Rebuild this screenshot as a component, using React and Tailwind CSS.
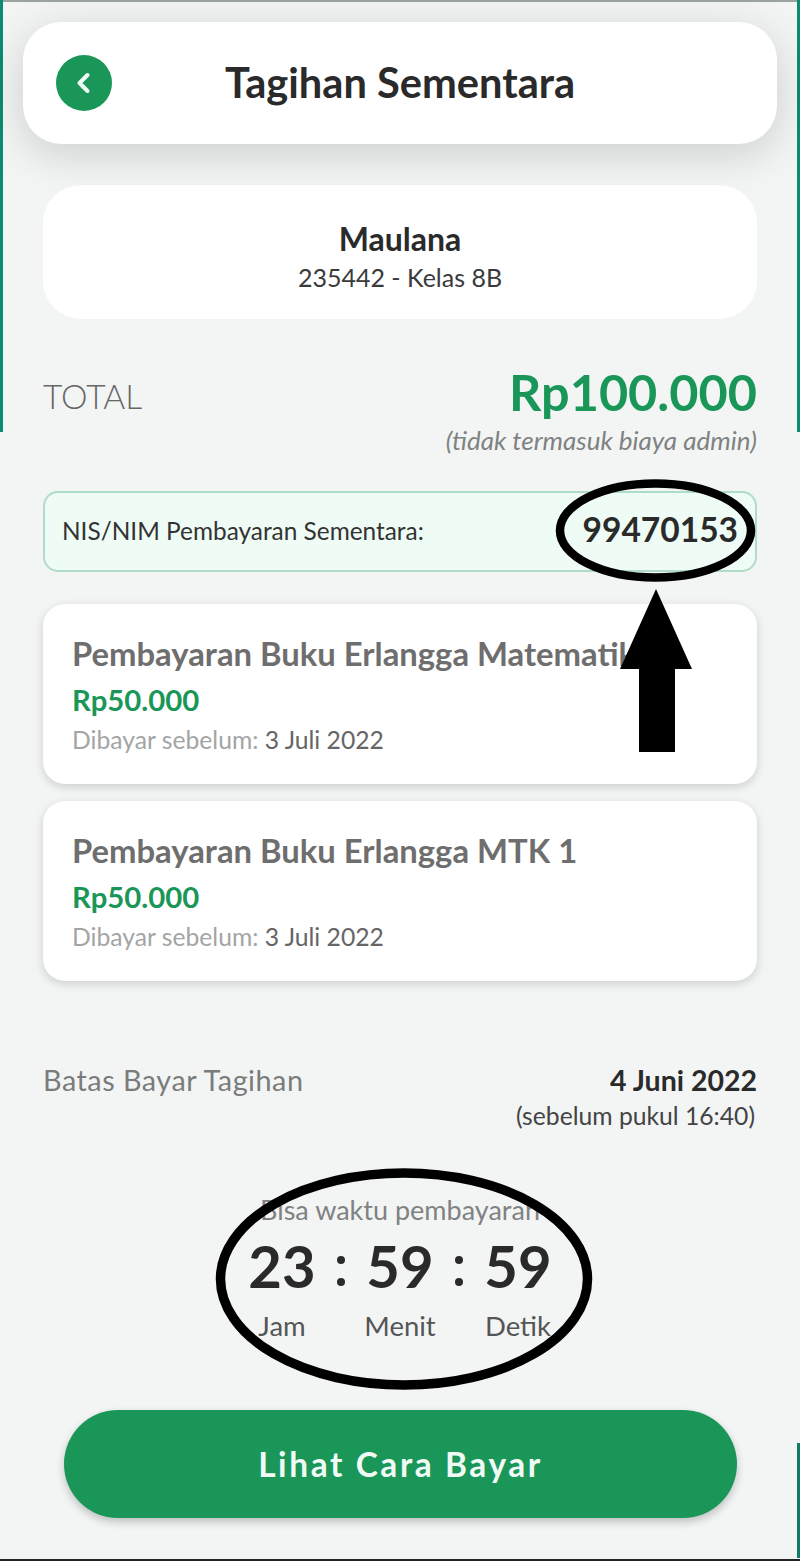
export default function App() {
  const Bill = ({ title, mt }) => (
    <div className={`mx-[43px] ${mt} h-[180px] rounded-[22px] bg-white pl-[29px] pt-[29px] shadow-[0_3px_10px_rgba(0,0,0,0.16)]`}>
      <div className="text-[32.8px] leading-[42px] font-bold whitespace-nowrap text-[#6e6e6e]">{title}</div>
      <div className="mt-[7px] text-[29.3px] leading-[36px] font-bold text-[#1a9758]">Rp50.000</div>
      <div className="mt-[7px] text-[24.7px] leading-[30px] text-[#a3a5a5]">
        Dibayar sebelum: <span className="text-[#666]">3 Juli 2022</span>
      </div>
    </div>
  );
  const Time = ({ value, label }) => (
    <div className="flex w-[66px] flex-col items-center">
      <div className="text-[58px] leading-[62px] font-bold text-[#2a2a2a]">{value}</div>
      <div className="mt-[12px] text-[27.5px] leading-[34px] whitespace-nowrap text-[#555]">{label}</div>
    </div>
  );
  const Colon = () => (
    <div className="flex h-[62px] w-[52px] flex-col items-center justify-center gap-[14px] pt-[10px]">
      <span className="h-[8px] w-[8px] rounded-full bg-[#2a2a2a]" />
      <span className="h-[8px] w-[8px] rounded-full bg-[#2a2a2a]" />
    </div>
  );
  return (
    <div className="relative h-[1561px] w-[800px] overflow-hidden bg-[#f3f5f5] pt-[22px] font-['Lato','Noto_Sans',sans-serif]">
      <div className="absolute top-0 left-0 h-[2px] w-full bg-[#9aa3a0]" />
      <div className="absolute top-0 left-0 h-[432px] w-[3px] bg-[#0f8a72]" />
      <div className="absolute top-0 right-0 h-[432px] w-[3px] bg-[#0f8a72]" />
      <div className="absolute right-0 bottom-[3px] h-[115px] w-[3px] bg-[#0f7a66]" />
      <div className="absolute bottom-0 left-0 h-[2px] w-full bg-[#222]" />

      <header className="relative z-10 mx-[23px] flex h-[122px] items-center rounded-[38px] bg-white px-[33px] shadow-[0_10px_44px_rgba(0,0,0,0.16)]">
        <button className="flex h-[56px] w-[56px] shrink-0 items-center justify-center rounded-full bg-[#1a9758]">
          <svg width="24" height="28" viewBox="0 0 24 28" fill="none" stroke="#f1fbf6" strokeWidth="4" strokeLinecap="round" strokeLinejoin="round">
            <path d="M15.5 6 L7.5 14 L15.5 22" />
          </svg>
        </button>
        <h1 className="flex-1 pb-[2px] text-center text-[41.6px] leading-[52px] font-bold text-[#2a2a2a]">Tagihan Sementara</h1>
        <div className="w-[56px] shrink-0" />
      </header>

      <section className="mx-[43px] mt-[41px] flex h-[134px] flex-col items-center justify-center rounded-[38px] bg-white pt-[7px]">
        <div className="text-[32px] leading-[40px] font-bold text-[#2a2a2a]">Maulana</div>
        <div className="mt-[2px] text-[25px] leading-[32px] text-[#3a3a3a]">235442 - Kelas 8B</div>
      </section>

      <section className="mx-[43px] mt-[41px]">
        <div className="flex items-center justify-between">
          <span className="mt-[8px] text-[33.5px] leading-[40px] font-light text-[#666]">TOTAL</span>
          <span className="text-[50.4px] leading-[64px] font-bold text-[#1a9758]">Rp100.000</span>
        </div>
        <div className="mt-[1px] text-right text-[26px] leading-[30px] text-[#808282] italic">(tidak termasuk biaya admin)</div>
      </section>

      <section className="mx-[43px] mt-[36px] flex h-[81px] items-center justify-between rounded-[15px] border-2 border-[#aedcc6] bg-[#effcf5] pr-[17px] pb-[4px] pl-[17px]">
        <span className="mt-[4px] text-[24.4px] text-[#333]">NIS/NIM Pembayaran Sementara:</span>
        <span className="text-[33.5px] font-bold text-[#2a2a2a]">99470153</span>
      </section>

      <div className="mt-[32px]">
        <Bill title="Pembayaran Buku Erlangga Matematika" mt="mt-0" />
        <Bill title="Pembayaran Buku Erlangga MTK 1" mt="mt-[17px]" />
      </div>

      <section className="mx-[43px] mt-[81px]">
        <div className="flex items-center justify-between">
          <span className="text-[28.8px] leading-[36px] tracking-[0.5px] text-[#7a7c7c]">Batas Bayar Tagihan</span>
          <span className="text-[28.5px] leading-[36px] font-bold text-[#2a2a2a]">4 Juni 2022</span>
        </div>
        <div className="pr-[2px] text-right text-[24.7px] leading-[36px] text-[#444]">(sebelum pukul 16:40)</div>
      </section>

      <section className="mt-[59px] flex flex-col items-center">
        <div className="text-[27px] leading-[34px] text-[#808282]">Bisa waktu pembayaran</div>
        <div className="mt-[8px] flex">
          <Time value="23" label="Jam" />
          <Colon />
          <Time value="59" label="Menit" />
          <Colon />
          <Time value="59" label="Detik" />
        </div>
      </section>

      <button className="mx-[64px] mt-[67px] flex h-[108px] w-[673px] items-center justify-center rounded-full bg-[#1a9758] text-[33.4px] font-bold tracking-[2.6px] text-[#f1fbf6] shadow-[0_4px_8px_rgba(0,0,0,0.22)]">
        Lihat Cara Bayar
      </button>

      <svg className="pointer-events-none absolute top-0 left-0 z-20" width="800" height="1561" viewBox="0 0 800 1561" fill="none">
        <ellipse cx="655.5" cy="530.5" rx="95.5" ry="47" stroke="#000" strokeWidth="8.5" />
        <ellipse cx="404" cy="1279" rx="183.5" ry="106" stroke="#000" strokeWidth="9.5" />
        <path d="M656 589 L692 669 L675 669 L675 752 L639 752 L639 669 L620 669 Z" fill="#000" />
      </svg>
    </div>
  );
}
